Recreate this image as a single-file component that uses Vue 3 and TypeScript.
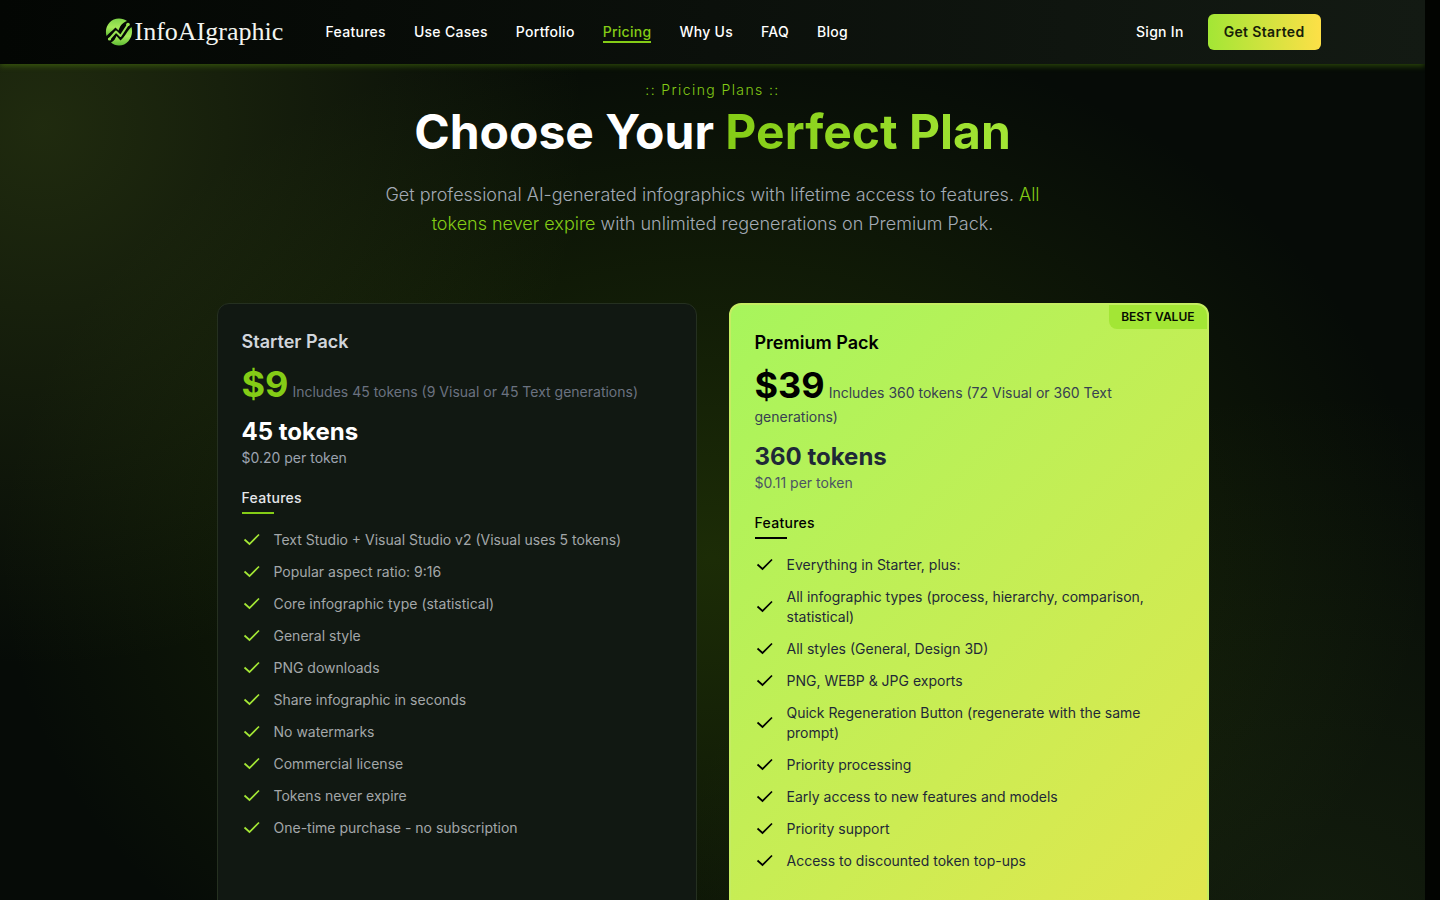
<script setup lang="ts">
interface Plan {
  id: string
  name: string
  price: string
  includes: string
  tokens: string
  rate: string
  features: string[]
  badge?: string
}

const links: string[] = ['Features', 'Use Cases', 'Portfolio', 'Pricing', 'Why Us', 'FAQ', 'Blog']
const active = 'Pricing'

const plans: Plan[] = [
  {
    id: 'starter',
    name: 'Starter Pack',
    price: '$9',
    includes: 'Includes 45 tokens (9 Visual or 45 Text generations)',
    tokens: '45 tokens',
    rate: '$0.20 per token',
    features: [
      'Text Studio + Visual Studio v2 (Visual uses 5 tokens)',
      'Popular aspect ratio: 9:16',
      'Core infographic type (statistical)',
      'General style',
      'PNG downloads',
      'Share infographic in seconds',
      'No watermarks',
      'Commercial license',
      'Tokens never expire',
      'One-time purchase - no subscription',
    ],
  },
  {
    id: 'premium',
    name: 'Premium Pack',
    price: '$39',
    includes: 'Includes 360 tokens (72 Visual or 360 Text generations)',
    tokens: '360 tokens',
    rate: '$0.11 per token',
    badge: 'BEST VALUE',
    features: [
      'Everything in Starter, plus:',
      'All infographic types (process, hierarchy, comparison, statistical)',
      'All styles (General, Design 3D)',
      'PNG, WEBP & JPG exports',
      'Quick Regeneration Button (regenerate with the same prompt)',
      'Priority processing',
      'Early access to new features and models',
      'Priority support',
      'Access to discounted token top-ups',
    ],
  },
]
</script>

<template>
  <div class="shell">
    <div class="page">
      <header class="topbar">
        <div class="topbar-inner">
          <a class="brand" href="#">
            <svg class="brand-mark" viewBox="0 0 28 28" aria-hidden="true">
              <defs>
                <linearGradient id="mark" x1="0" y1="0" x2="0" y2="1">
                  <stop offset="0" stop-color="#7ed348" />
                  <stop offset="0.5" stop-color="#a5ea58" />
                  <stop offset="1" stop-color="#5fbb35" />
                </linearGradient>
              </defs>
              <path d="M1.500 18 C-1 9 5 0.500 14 0.500 C17 0.500 20 1.500 22 3 C17 5 15 8 13.500 12.500 L10.500 9.500 C7 13 4 15 1.500 18 Z" fill="url(#mark)" />
              <path d="M26.500 9 C29 18 23 27.500 14 27.500 C11 27.500 8 26.500 6 24.500 C9 23 10.500 20.500 11.500 18 L15.500 22.500 C20 19 22 13 26.500 9 Z" fill="url(#mark)" />
              <path d="M4.500 21 L11 13.500 L15.500 18 L23 6.500" fill="none" stroke="#98e452" stroke-width="2" stroke-linecap="round" stroke-linejoin="round" />
              <circle cx="4.500" cy="21" r="1.600" fill="#98e452" />
              <circle cx="23" cy="6.500" r="1.800" fill="#98e452" />
            </svg>
            <span class="brand-name">InfoAIgraphic</span>
          </a>
          <nav class="nav" aria-label="Main">
            <a v-for="link in links" :key="link" href="#" :class="['nav-link', { current: link === active }]">{{ link }}</a>
          </nav>
          <a class="nav-link" href="#">Sign In</a>
          <button class="cta" type="button">Get Started</button>
        </div>
      </header>

      <main class="pricing">
        <p class="eyebrow">:: Pricing Plans ::</p>
        <h1 class="title">Choose Your <span class="accent">Perfect Plan</span></h1>
        <p class="lead">
          Get professional AI-generated infographics with lifetime access to features.
          <span class="lime">All tokens never expire</span> with unlimited regenerations on Premium Pack.
        </p>

        <div class="plans">
          <article v-for="plan in plans" :key="plan.id" :class="['card', plan.id]">
            <span v-if="plan.badge" class="badge">{{ plan.badge }}</span>
            <h2 class="name">{{ plan.name }}</h2>
            <p class="price-line">
              <span class="price">{{ plan.price }}</span>
              <span class="includes">{{ ' ' + plan.includes }}</span>
            </p>
            <p class="tokens">{{ plan.tokens }}</p>
            <p class="rate">{{ plan.rate }}</p>
            <h3 class="subhead">Features</h3>
            <ul class="features">
              <li v-for="feature in plan.features" :key="feature">
                <svg class="check" viewBox="0 0 20 20" aria-hidden="true">
                  <path d="M2.500 9.500 L7.500 14 L17 4.500" />
                </svg>
                <span>{{ feature }}</span>
              </li>
            </ul>
          </article>
        </div>
      </main>
    </div>
  </div>
</template>

<style>
body {
  margin: 0;
  background: #020401;
}
</style>

<style scoped>
.shell {
  box-sizing: border-box;
  height: 100vh;
  overflow: hidden;
  padding-right: 15px;
  background: #020401;
  color: #fff;
  font-family: Inter, "Liberation Sans", sans-serif;
  font-size: 14px;
  line-height: 20px;
}
.page {
  height: 100vh;
  overflow: hidden;
  background:
    radial-gradient(ellipse 38% 60% at 3% 14%, rgba(101, 128, 35, 0.27), rgba(101, 128, 35, 0) 100%),
    radial-gradient(ellipse 50% 60% at 50% 62%, rgba(85, 130, 5, 0.28), rgba(70, 110, 10, 0) 100%),
    radial-gradient(ellipse 45% 60% at 92% 104%, rgba(70, 100, 38, 0.2), rgba(70, 100, 38, 0) 100%),
    #060b07;
}
p, h1, h2, h3, ul {
  margin: 0;
  padding: 0;
}
a {
  color: inherit;
  text-decoration: none;
}
.topbar {
  position: relative;
  background: linear-gradient(90deg, #030603, #131a13);
  box-shadow: 0 2px 6px rgba(101, 163, 13, 0.4);
}
.topbar-inner {
  box-sizing: border-box;
  display: flex;
  align-items: center;
  max-width: 1280px;
  height: 64px;
  margin: 0 auto;
  padding: 0 32px;
}
.brand {
  display: flex;
  align-items: center;
  gap: 2px;
  width: 180px;
}
.brand-mark {
  flex: none;
  width: 28px;
  height: 28px;
}
.brand-name {
  color: #f3f5f0;
  font-family: "Liberation Serif", serif;
  font-size: 26px;
  line-height: 32px;
}
.nav {
  display: flex;
  flex: 1;
  gap: 28px;
  margin-left: 41px;
}
.nav-link {
  font-weight: 500;
  letter-spacing: 0.02em;
  border-bottom: 2px solid transparent;
  border-top: 2px solid transparent;
  line-height: 18px;
}
.nav-link.current {
  color: #84cc16;
  border-bottom-color: #84cc16;
}
.cta {
  height: 36px;
  margin-left: 24px;
  padding: 0 16px;
  border: 0;
  border-radius: 6px;
  background: linear-gradient(90deg, #a3e635, #fde047);
  color: #172008;
  font: inherit;
  font-weight: 600;
  letter-spacing: 0.025em;
}
.pricing {
  padding: 16px 16px 0;
  text-align: center;
}
.eyebrow {
  color: #84cc16;
  font-weight: 300;
  letter-spacing: 0.1em;
}
.title {
  margin-top: 8px;
  font-size: 48px;
  font-weight: 700;
  line-height: 48px;
}
.accent {
  background: linear-gradient(90deg, #84cc16, #a3e635);
  background-clip: text;
  color: transparent;
}
.lead {
  max-width: 672px;
  margin: 24px auto 0;
  color: #a3aab5;
  font-size: 18px;
  font-weight: 300;
  line-height: 29px;
}
.lime {
  color: #84cc16;
}
.plans {
  display: grid;
  grid-template-columns: 1fr 1fr;
  gap: 32px;
  max-width: 992px;
  margin: 65px auto 0;
  text-align: left;
}
.card {
  position: relative;
  overflow: hidden;
  padding: 24px 24px 96px;
  border: 1px solid #253020;
  border-radius: 12px;
  background: #111812;
}
.premium {
  border: 2px solid #c5ed62;
  background: linear-gradient(135deg, #a7f55c, #fde047 140%);
}
.badge {
  position: absolute;
  top: 0;
  right: 0;
  padding: 4px 12px;
  border-bottom-left-radius: 8px;
  background: #a3e635;
  color: #060b02;
  font-size: 12px;
  font-weight: 600;
  line-height: 16px;
}
.name {
  color: #d1d5db;
  font-size: 18px;
  font-weight: 600;
  line-height: 28px;
}
.price-line {
  margin-top: 8px;
  line-height: 24px;
}
.price {
  color: #84cc16;
  font-size: 36px;
  font-weight: 700;
  line-height: 40px;
}
.includes {
  color: #6b7280;
}
.tokens {
  margin-top: 12px;
  font-size: 24px;
  font-weight: 700;
  line-height: 32px;
}
.rate {
  color: #9ca3af;
}
.subhead {
  margin-top: 20px;
  padding-bottom: 4px;
  color: #e5e7eb;
  font-size: 14px;
  font-weight: 500;
  letter-spacing: 0.02em;
  line-height: 20px;
}
.subhead::after {
  content: "";
  display: block;
  width: 32px;
  height: 2px;
  margin: 4px 0 -6px;
  background: #84cc16;
}
.features {
  display: grid;
  gap: 12px;
  margin-top: 18px;
  color: #a3a7a9;
  list-style: none;
}
.features li {
  display: flex;
  align-items: center;
  gap: 12px;
}
.check {
  flex: none;
  width: 20px;
  height: 20px;
  fill: none;
  stroke: #a3e635;
  stroke-width: 1.7;
}
.premium .name,
.premium .price,
.premium .subhead {
  color: #000;
}
.premium .includes {
  color: #374151;
}
.premium .tokens {
  color: #1f2937;
}
.premium .rate {
  color: #4b5563;
}
.premium .features {
  color: #1f2937;
}
.premium .subhead::after {
  background: #000;
}
.premium .check {
  stroke: #000;
}
</style>
